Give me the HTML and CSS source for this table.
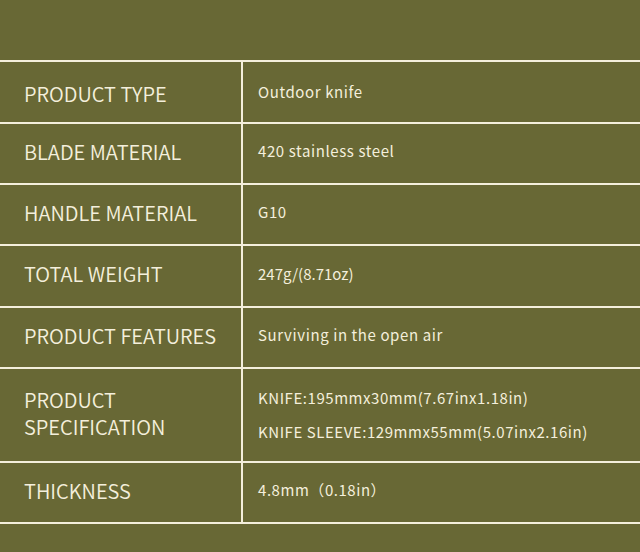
FILE: index.html
```html
<!DOCTYPE html>
<html>
<head>
<meta charset="utf-8">
<link rel="stylesheet" href="styles.css">
</head>
<body>
<div class="page">
  <div class="table">
    <div class="row r60 first">
      <div class="label">PRODUCT TYPE</div>
      <div class="value"><span class="hum">Outdoor knife</span></div>
    </div>
    <div class="row r59">
      <div class="label">BLADE MATERIAL</div>
      <div class="value"><span class="hum">420 stainless steel</span></div>
    </div>
    <div class="row r59">
      <div class="label">HANDLE MATERIAL</div>
      <div class="value"><span class="hum">G10</span></div>
    </div>
    <div class="row r60">
      <div class="label">TOTAL WEIGHT</div>
      <div class="value"><span class="hum tight">247g/(8.71oz)</span></div>
    </div>
    <div class="row r59">
      <div class="label">PRODUCT FEATURES</div>
      <div class="value"><span class="hum">Surviving in the open air</span></div>
    </div>
    <div class="row r92 spec-row">
      <div class="label">PRODUCT<br>SPECIFICATION</div>
      <div class="value spec">
        <span class="jp">KNIFE:195mmx30mm(7.67inx1.18in)</span>
        <span class="jp">KNIFE SLEEVE:129mmx55mm(5.07inx2.16in)</span>
      </div>
    </div>
    <div class="row r59">
      <div class="label">THICKNESS</div>
      <div class="value"><span class="jp">4.8mm（0.18in）</span></div>
    </div>
  </div>
</div>
</body>
</html>
```
FILE: styles.css
```css
html, body {
  margin: 0;
  padding: 0;
  background: #686835;
}
.page {
  width: 640px;
  height: 552px;
  background: #686835;
  padding-top: 60px;
  box-sizing: border-box;
  color: #f4efdc;
}
.table {
  border-top: 2px solid #f4efdc;
}
.row {
  display: grid;
  grid-template-columns: 243px 1fr;
  border-bottom: 2px solid #f4efdc;
}
.r60 { height: 60px; }
.r59 { height: 59px; }
.r92 { height: 92px; }
.label {
  border-right: 2px solid #f4efdc;
  padding-left: 24px;
  padding-bottom: 5px;
  display: flex;
  align-items: center;
  font-family: "Noto Sans CJK JP", "Noto Sans", sans-serif;
  font-weight: 350;
  font-size: 20px;
  line-height: 27px;
  box-sizing: border-box;
}
.value {
  padding-left: 15px;
  display: flex;
  flex-direction: column;
  justify-content: center;
  font-family: "Noto Sans CJK JP", "Noto Sans", sans-serif;
  font-size: 15px;
  line-height: 20px;
  padding-bottom: 5px;
  box-sizing: border-box;
}
.first .label {
  padding-top: 3px;
  padding-bottom: 0;
}
.first .value {
  padding-top: 0;
  padding-bottom: 0;
}
.spec-row .label {
  padding-bottom: 4px;
}
.hum {
  letter-spacing: 0.6px;
}
.hum.tight {
  letter-spacing: 0;
}
.jp {
  letter-spacing: 0.55px;
}
.spec {
  gap: 14px;
  padding-bottom: 0;
}
```
